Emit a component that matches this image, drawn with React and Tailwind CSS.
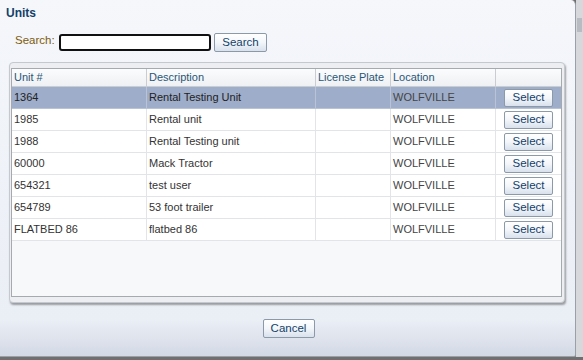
import React from "react";

const rows = [
  ["1364", "Rental Testing Unit", "", "WOLFVILLE"],
  ["1985", "Rental unit", "", "WOLFVILLE"],
  ["1988", "Rental Testing unit", "", "WOLFVILLE"],
  ["60000", "Mack Tractor", "", "WOLFVILLE"],
  ["654321", "test user", "", "WOLFVILLE"],
  ["654789", "53 foot trailer", "", "WOLFVILLE"],
  ["FLATBED 86", "flatbed 86", "", "WOLFVILLE"],
];

function Btn({ children, className = "" }) {
  return (
    <button
      className={
        "flex items-center justify-center border border-[#8c99a8] rounded-[2px] bg-gradient-to-b from-[#ffffff] via-[#f3f6fa] to-[#d9e1ec] text-[#143f69] text-[11.5px] leading-none " +
        className
      }
    >
      {children}
    </button>
  );
}

export default function App() {
  return (
    <div className="w-[583px] h-[360px] bg-[#6f6f6f] overflow-hidden font-['Liberation_Sans',Arial,sans-serif]">
      <div className="flex h-[357px]">
        <div className="w-[576px] h-[357px] rounded-tr-[5px] rounded-br-[2px] border-r border-b border-[#9aa0a8] bg-gradient-to-b from-[#f5f7fb] via-[#eaeef5] via-90% to-[#d3d9e5] flex flex-col">
          <div className="h-[33px] pl-[6px] pt-[6px] text-[12px] font-bold leading-[14px] text-[#12406b]">
            Units
          </div>
          <div className="h-[19px] flex items-center pl-[15px]">
            <span className="text-[11.5px] text-[#7d5c0c] w-[44px] -mt-[3px]">Search:</span>
            <div className="w-[152px] h-[17px] border-2 border-[#111] rounded-[3px] bg-white"></div>
            <Btn className="ml-[3px] w-[53px] h-[19px]">Search</Btn>
          </div>
          <div className="mt-[10px] ml-[9px] w-[556px] h-[241px] rounded-[4px] border border-[#c4c8cf] bg-[#eceef2] shadow-[1px_2px_2px_rgba(0,0,0,0.35)] pt-[5px] pl-[1px] pr-[2px] pb-[5px]">
            <div className="w-[551px] h-[229px] border border-[#a6a9ad] bg-[#f7f8fa] flex flex-col text-[11px] whitespace-nowrap">
              <div className="flex h-[18px] bg-gradient-to-b from-[#fbfcfd] to-[#eef0f3] border-b border-[#c9ccd0] text-[#2a5677] leading-[17px]">
                <div className="w-[135px] pl-[2px] border-r border-[#c9ccd0] overflow-hidden">Unit #</div>
                <div className="w-[169px] pl-[2px] border-r border-[#c9ccd0] overflow-hidden">Description</div>
                <div className="w-[75px] pl-[2px] border-r border-[#c9ccd0] overflow-hidden">License Plate</div>
                <div className="w-[105px] pl-[2px] border-r border-[#c9ccd0] overflow-hidden">Location</div>
                <div className="flex-1"></div>
              </div>
              {rows.map((r, i) => {
                const sel = i === 0;
                const line = sel ? "border-[#b9c3d6]" : "border-[#e2e4e7]";
                return (
                  <div
                    key={i}
                    className={
                      "flex h-[22px] border-b " +
                      (sel ? "bg-[#9eadc9] border-[#b9c3d6] text-[#222]" : "bg-white border-[#e2e4e7] text-[#333]")
                    }
                  >
                    <div className={"w-[135px] pl-[2px] flex items-center border-r " + line}>{r[0]}</div>
                    <div className={"w-[169px] pl-[2px] flex items-center border-r " + line}>{r[1]}</div>
                    <div className={"w-[75px] pl-[2px] flex items-center border-r " + line}>{r[2]}</div>
                    <div className={"w-[105px] pl-[2px] flex items-center border-r text-[#444] " + line}>{r[3]}</div>
                    <div className="flex-1 flex items-center pl-[8px]">
                      <Btn className="w-[49px] h-[18px]">Select</Btn>
                    </div>
                  </div>
                );
              })}
            </div>
          </div>
          <div className="mt-[16px] flex justify-center pl-[2px]">
            <Btn className="w-[52px] h-[19px]">Cancel</Btn>
          </div>
        </div>
        <div className="flex-1 bg-[#d6d8dc] relative">
          <div className="absolute left-[1px] top-[18px] w-[5px] h-[14px] bg-[#b8bcc2]"></div>
        </div>
      </div>
    </div>
  );
}
